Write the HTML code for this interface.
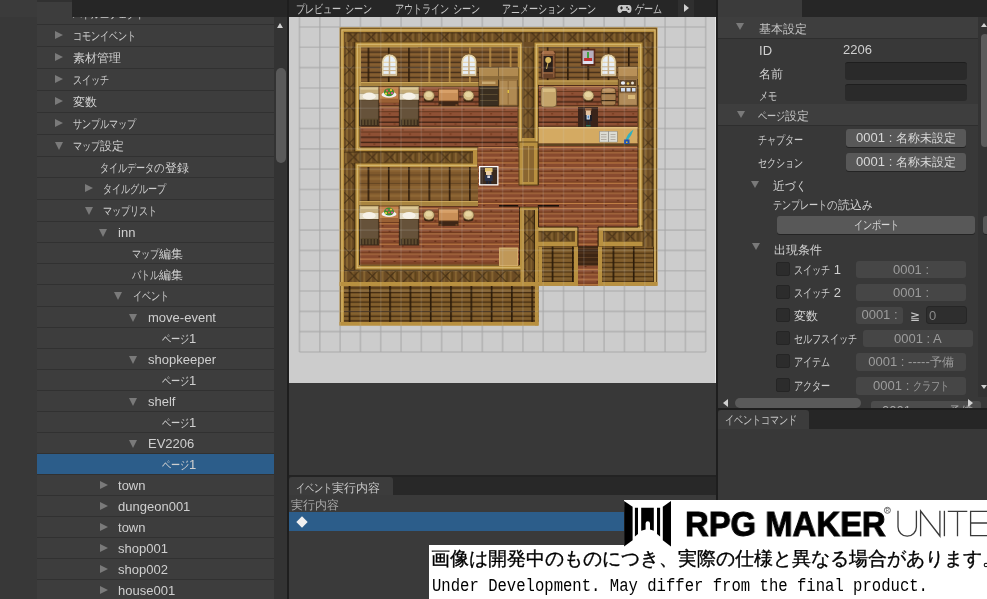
<!DOCTYPE html>
<html><head><meta charset="utf-8">
<style>
*{margin:0;padding:0;box-sizing:border-box}
html,body{width:987px;height:599px;overflow:hidden;background:#383838;font-family:"Liberation Sans",sans-serif;}
.a{position:absolute}
.row{position:absolute;left:37px;width:237px;background:#3d3d3d}
.row.sel{background:#2c5d8a}
.lbl{position:absolute;color:#cfcfcf;font-size:12px;line-height:16px;white-space:nowrap;will-change:transform}
.k{display:inline-block;width:9px;transform:scaleX(.76);transform-origin:0 0}
.h{display:inline-block;width:10.5px;transform:scaleX(.88);transform-origin:0 0}
.tri-r{position:absolute;width:0;height:0;border-top:4.5px solid transparent;border-bottom:4.5px solid transparent;border-left:8px solid #7a7a7a}
.tri-d{position:absolute;width:0;height:0;border-left:4.5px solid transparent;border-right:4.5px solid transparent;border-top:8px solid #7a7a7a}
</style></head><body>
<div class="a" style="left:0px;top:0px;width:37px;height:599px;background:#383838;"></div>
<div class="a" style="left:0px;top:0px;width:72px;height:17px;background:#3b3b3b;"></div>
<div class="a" style="left:37px;top:0px;width:237px;height:599px;background:#313131;"></div>
<div class="row" style="top:2px;height:22px"></div>
<div class="lbl" style="left:73px;top:5.6px"><span class="k">バ</span><span class="k">ト</span><span class="k">ル</span><span class="k">エ</span><span class="k">フ</span><span class="k">ェ</span><span class="k">ク</span><span class="k">ト</span></div>
<div class="row" style="top:25px;height:21px"></div>
<div class="tri-r" style="left:55px;top:31.0px"></div>
<div class="lbl" style="left:73px;top:28.1px"><span class="k">コ</span><span class="k">モ</span><span class="k">ン</span><span class="k">イ</span><span class="k">ベ</span><span class="k">ン</span><span class="k">ト</span></div>
<div class="row" style="top:47px;height:21px"></div>
<div class="tri-r" style="left:55px;top:53.0px"></div>
<div class="lbl" style="left:73px;top:50.1px">素材管理</div>
<div class="row" style="top:69px;height:21px"></div>
<div class="tri-r" style="left:55px;top:75.0px"></div>
<div class="lbl" style="left:73px;top:72.1px"><span class="k">ス</span><span class="k">イ</span><span class="k">ッ</span><span class="k">チ</span></div>
<div class="row" style="top:91px;height:21px"></div>
<div class="tri-r" style="left:55px;top:97.0px"></div>
<div class="lbl" style="left:73px;top:94.1px">変数</div>
<div class="row" style="top:113px;height:21px"></div>
<div class="tri-r" style="left:55px;top:119.0px"></div>
<div class="lbl" style="left:73px;top:116.1px"><span class="k">サ</span><span class="k">ン</span><span class="k">プ</span><span class="k">ル</span><span class="k">マ</span><span class="k">ッ</span><span class="k">プ</span></div>
<div class="row" style="top:135px;height:21px"></div>
<div class="tri-d" style="left:55px;top:142.0px"></div>
<div class="lbl" style="left:73px;top:138.1px"><span class="k">マ</span><span class="k">ッ</span><span class="k">プ</span>設定</div>
<div class="row" style="top:157px;height:20px"></div>
<div class="lbl" style="left:100px;top:159.6px"><span class="k">タ</span><span class="k">イ</span><span class="k">ル</span><span class="k">デ</span><span class="k">ー</span><span class="k">タ</span><span class="h">の</span>登録</div>
<div class="row" style="top:178px;height:21px"></div>
<div class="tri-r" style="left:85px;top:184.0px"></div>
<div class="lbl" style="left:103px;top:181.1px"><span class="k">タ</span><span class="k">イ</span><span class="k">ル</span><span class="k">グ</span><span class="k">ル</span><span class="k">ー</span><span class="k">プ</span></div>
<div class="row" style="top:200px;height:21px"></div>
<div class="tri-d" style="left:85px;top:207.0px"></div>
<div class="lbl" style="left:103px;top:203.1px"><span class="k">マ</span><span class="k">ッ</span><span class="k">プ</span><span class="k">リ</span><span class="k">ス</span><span class="k">ト</span></div>
<div class="row" style="top:222px;height:20px"></div>
<div class="tri-d" style="left:99px;top:228.5px"></div>
<div class="lbl" style="left:118px;top:224.6px"><span style="font-size:13px">i</span><span style="font-size:13px">n</span><span style="font-size:13px">n</span></div>
<div class="row" style="top:243px;height:20px"></div>
<div class="lbl" style="left:132px;top:245.6px"><span class="k">マ</span><span class="k">ッ</span><span class="k">プ</span>編集</div>
<div class="row" style="top:264px;height:20px"></div>
<div class="lbl" style="left:132px;top:266.6px"><span class="k">バ</span><span class="k">ト</span><span class="k">ル</span>編集</div>
<div class="row" style="top:285px;height:21px"></div>
<div class="tri-d" style="left:114px;top:292.0px"></div>
<div class="lbl" style="left:133px;top:288.1px"><span class="k">イ</span><span class="k">ベ</span><span class="k">ン</span><span class="k">ト</span></div>
<div class="row" style="top:307px;height:20px"></div>
<div class="tri-d" style="left:129px;top:313.5px"></div>
<div class="lbl" style="left:148px;top:309.6px"><span style="font-size:13px">m</span><span style="font-size:13px">o</span><span style="font-size:13px">v</span><span style="font-size:13px">e</span><span style="font-size:13px">-</span><span style="font-size:13px">e</span><span style="font-size:13px">v</span><span style="font-size:13px">e</span><span style="font-size:13px">n</span><span style="font-size:13px">t</span></div>
<div class="row" style="top:328px;height:20px"></div>
<div class="lbl" style="left:162px;top:330.6px"><span class="k">ペ</span><span class="k">ー</span><span class="k">ジ</span><span style="font-size:13px">1</span></div>
<div class="row" style="top:349px;height:20px"></div>
<div class="tri-d" style="left:129px;top:355.5px"></div>
<div class="lbl" style="left:148px;top:351.6px"><span style="font-size:13px">s</span><span style="font-size:13px">h</span><span style="font-size:13px">o</span><span style="font-size:13px">p</span><span style="font-size:13px">k</span><span style="font-size:13px">e</span><span style="font-size:13px">e</span><span style="font-size:13px">p</span><span style="font-size:13px">e</span><span style="font-size:13px">r</span></div>
<div class="row" style="top:370px;height:20px"></div>
<div class="lbl" style="left:162px;top:372.6px"><span class="k">ペ</span><span class="k">ー</span><span class="k">ジ</span><span style="font-size:13px">1</span></div>
<div class="row" style="top:391px;height:20px"></div>
<div class="tri-d" style="left:129px;top:397.5px"></div>
<div class="lbl" style="left:148px;top:393.6px"><span style="font-size:13px">s</span><span style="font-size:13px">h</span><span style="font-size:13px">e</span><span style="font-size:13px">l</span><span style="font-size:13px">f</span></div>
<div class="row" style="top:412px;height:20px"></div>
<div class="lbl" style="left:162px;top:414.6px"><span class="k">ペ</span><span class="k">ー</span><span class="k">ジ</span><span style="font-size:13px">1</span></div>
<div class="row" style="top:433px;height:20px"></div>
<div class="tri-d" style="left:129px;top:439.5px"></div>
<div class="lbl" style="left:148px;top:435.6px"><span style="font-size:13px">E</span><span style="font-size:13px">V</span><span style="font-size:13px">2</span><span style="font-size:13px">2</span><span style="font-size:13px">0</span><span style="font-size:13px">6</span></div>
<div class="row sel" style="top:454px;height:20px"></div>
<div class="lbl" style="left:162px;top:456.6px"><span class="k">ペ</span><span class="k">ー</span><span class="k">ジ</span><span style="font-size:13px">1</span></div>
<div class="row" style="top:475px;height:20px"></div>
<div class="tri-r" style="left:100px;top:480.5px"></div>
<div class="lbl" style="left:118px;top:477.6px"><span style="font-size:13px">t</span><span style="font-size:13px">o</span><span style="font-size:13px">w</span><span style="font-size:13px">n</span></div>
<div class="row" style="top:496px;height:20px"></div>
<div class="tri-r" style="left:100px;top:501.5px"></div>
<div class="lbl" style="left:118px;top:498.6px"><span style="font-size:13px">d</span><span style="font-size:13px">u</span><span style="font-size:13px">n</span><span style="font-size:13px">g</span><span style="font-size:13px">e</span><span style="font-size:13px">o</span><span style="font-size:13px">n</span><span style="font-size:13px">0</span><span style="font-size:13px">0</span><span style="font-size:13px">1</span></div>
<div class="row" style="top:517px;height:20px"></div>
<div class="tri-r" style="left:100px;top:522.5px"></div>
<div class="lbl" style="left:118px;top:519.6px"><span style="font-size:13px">t</span><span style="font-size:13px">o</span><span style="font-size:13px">w</span><span style="font-size:13px">n</span></div>
<div class="row" style="top:538px;height:20px"></div>
<div class="tri-r" style="left:100px;top:543.5px"></div>
<div class="lbl" style="left:118px;top:540.6px"><span style="font-size:13px">s</span><span style="font-size:13px">h</span><span style="font-size:13px">o</span><span style="font-size:13px">p</span><span style="font-size:13px">0</span><span style="font-size:13px">0</span><span style="font-size:13px">1</span></div>
<div class="row" style="top:559px;height:20px"></div>
<div class="tri-r" style="left:100px;top:564.5px"></div>
<div class="lbl" style="left:118px;top:561.6px"><span style="font-size:13px">s</span><span style="font-size:13px">h</span><span style="font-size:13px">o</span><span style="font-size:13px">p</span><span style="font-size:13px">0</span><span style="font-size:13px">0</span><span style="font-size:13px">2</span></div>
<div class="row" style="top:580px;height:20px"></div>
<div class="tri-r" style="left:100px;top:585.5px"></div>
<div class="lbl" style="left:118px;top:582.6px"><span style="font-size:13px">h</span><span style="font-size:13px">o</span><span style="font-size:13px">u</span><span style="font-size:13px">s</span><span style="font-size:13px">e</span><span style="font-size:13px">0</span><span style="font-size:13px">0</span><span style="font-size:13px">1</span></div>
<div class="a" style="left:72px;top:0px;width:216px;height:17px;background:#262626;"></div>
<div class="a" style="left:274px;top:17px;width:14px;height:582px;background:#333333;"></div>
<div class="a" style="left:276px;top:68px;width:10px;height:95px;background:#5a5a5a;border-radius:5px"></div>
<div class="a" style="left:277px;top:23px;width:0;height:0;border-left:3.5px solid transparent;border-right:3.5px solid transparent;border-bottom:5px solid #d0d0d0"></div>
<div class="a" style="left:287px;top:0px;width:2px;height:599px;background:#1e1e1e;"></div>
<div class="a" style="left:289px;top:0px;width:427px;height:17px;background:#262626;"></div>
<div class="a" style="left:289px;top:17px;width:427px;height:366px;background:#cccccc;"></div>
<div class="a" style="left:715px;top:17px;width:1px;height:366px;background:#e4e4e4;"></div>
<svg class="a" style="left:289px;top:17px" width="427" height="366"><line x1="10.50" y1="0" x2="10.50" y2="334.96" stroke="#8a8a8a" stroke-opacity=".38" stroke-width="1.6"/><line x1="30.81" y1="0" x2="30.81" y2="334.96" stroke="#8a8a8a" stroke-opacity=".38" stroke-width="1.6"/><line x1="51.12" y1="0" x2="51.12" y2="334.96" stroke="#8a8a8a" stroke-opacity=".38" stroke-width="1.6"/><line x1="71.43" y1="0" x2="71.43" y2="334.96" stroke="#8a8a8a" stroke-opacity=".38" stroke-width="1.6"/><line x1="91.74" y1="0" x2="91.74" y2="334.96" stroke="#8a8a8a" stroke-opacity=".38" stroke-width="1.6"/><line x1="112.05" y1="0" x2="112.05" y2="334.96" stroke="#8a8a8a" stroke-opacity=".38" stroke-width="1.6"/><line x1="132.36" y1="0" x2="132.36" y2="334.96" stroke="#8a8a8a" stroke-opacity=".38" stroke-width="1.6"/><line x1="152.67" y1="0" x2="152.67" y2="334.96" stroke="#8a8a8a" stroke-opacity=".38" stroke-width="1.6"/><line x1="172.98" y1="0" x2="172.98" y2="334.96" stroke="#8a8a8a" stroke-opacity=".38" stroke-width="1.6"/><line x1="193.29" y1="0" x2="193.29" y2="334.96" stroke="#8a8a8a" stroke-opacity=".38" stroke-width="1.6"/><line x1="213.60" y1="0" x2="213.60" y2="334.96" stroke="#8a8a8a" stroke-opacity=".38" stroke-width="1.6"/><line x1="233.91" y1="0" x2="233.91" y2="334.96" stroke="#8a8a8a" stroke-opacity=".38" stroke-width="1.6"/><line x1="254.22" y1="0" x2="254.22" y2="334.96" stroke="#8a8a8a" stroke-opacity=".38" stroke-width="1.6"/><line x1="274.53" y1="0" x2="274.53" y2="334.96" stroke="#8a8a8a" stroke-opacity=".38" stroke-width="1.6"/><line x1="294.84" y1="0" x2="294.84" y2="334.96" stroke="#8a8a8a" stroke-opacity=".38" stroke-width="1.6"/><line x1="315.15" y1="0" x2="315.15" y2="334.96" stroke="#8a8a8a" stroke-opacity=".38" stroke-width="1.6"/><line x1="335.46" y1="0" x2="335.46" y2="334.96" stroke="#8a8a8a" stroke-opacity=".38" stroke-width="1.6"/><line x1="355.77" y1="0" x2="355.77" y2="334.96" stroke="#8a8a8a" stroke-opacity=".38" stroke-width="1.6"/><line x1="376.08" y1="0" x2="376.08" y2="334.96" stroke="#8a8a8a" stroke-opacity=".38" stroke-width="1.6"/><line x1="396.39" y1="0" x2="396.39" y2="334.96" stroke="#8a8a8a" stroke-opacity=".38" stroke-width="1.6"/><line x1="416.70" y1="0" x2="416.70" y2="334.96" stroke="#8a8a8a" stroke-opacity=".38" stroke-width="1.6"/><line x1="10.50" y1="10.00" x2="416.70" y2="10.00" stroke="#8a8a8a" stroke-opacity=".38" stroke-width="1.6"/><line x1="10.50" y1="30.31" x2="416.70" y2="30.31" stroke="#8a8a8a" stroke-opacity=".38" stroke-width="1.6"/><line x1="10.50" y1="50.62" x2="416.70" y2="50.62" stroke="#8a8a8a" stroke-opacity=".38" stroke-width="1.6"/><line x1="10.50" y1="70.93" x2="416.70" y2="70.93" stroke="#8a8a8a" stroke-opacity=".38" stroke-width="1.6"/><line x1="10.50" y1="91.24" x2="416.70" y2="91.24" stroke="#8a8a8a" stroke-opacity=".38" stroke-width="1.6"/><line x1="10.50" y1="111.55" x2="416.70" y2="111.55" stroke="#8a8a8a" stroke-opacity=".38" stroke-width="1.6"/><line x1="10.50" y1="131.86" x2="416.70" y2="131.86" stroke="#8a8a8a" stroke-opacity=".38" stroke-width="1.6"/><line x1="10.50" y1="152.17" x2="416.70" y2="152.17" stroke="#8a8a8a" stroke-opacity=".38" stroke-width="1.6"/><line x1="10.50" y1="172.48" x2="416.70" y2="172.48" stroke="#8a8a8a" stroke-opacity=".38" stroke-width="1.6"/><line x1="10.50" y1="192.79" x2="416.70" y2="192.79" stroke="#8a8a8a" stroke-opacity=".38" stroke-width="1.6"/><line x1="10.50" y1="213.10" x2="416.70" y2="213.10" stroke="#8a8a8a" stroke-opacity=".38" stroke-width="1.6"/><line x1="10.50" y1="233.41" x2="416.70" y2="233.41" stroke="#8a8a8a" stroke-opacity=".38" stroke-width="1.6"/><line x1="10.50" y1="253.72" x2="416.70" y2="253.72" stroke="#8a8a8a" stroke-opacity=".38" stroke-width="1.6"/><line x1="10.50" y1="274.03" x2="416.70" y2="274.03" stroke="#8a8a8a" stroke-opacity=".38" stroke-width="1.6"/><line x1="10.50" y1="294.34" x2="416.70" y2="294.34" stroke="#8a8a8a" stroke-opacity=".38" stroke-width="1.6"/><line x1="10.50" y1="314.65" x2="416.70" y2="314.65" stroke="#8a8a8a" stroke-opacity=".38" stroke-width="1.6"/><line x1="10.50" y1="334.96" x2="416.70" y2="334.96" stroke="#8a8a8a" stroke-opacity=".38" stroke-width="1.6"/></svg>
<svg class="a" style="left:0;top:0" width="987" height="599" viewBox="0 0 987 599">
<defs>
<pattern id="floor" x="0" y="25.2" width="20.3" height="20.3" patternUnits="userSpaceOnUse">
<rect width="20.3" height="20.3" fill="#884a2e"/>
<rect y="0" width="20.3" height="1.1" fill="#c28250"/>
<rect y="5.07" width="20.3" height="1.1" fill="#b87a48"/>
<rect y="10.15" width="20.3" height="1.1" fill="#c28250"/>
<rect y="15.22" width="20.3" height="1.1" fill="#cc884a"/>
<rect y="4.1" width="20.3" height="0.9" fill="#6a3418"/>
<rect y="14.2" width="20.3" height="0.9" fill="#6a3418"/>
<rect x="3" y="2.5" width="2" height="1" fill="#5e2a12"/><rect x="13" y="7.5" width="2" height="1" fill="#5e2a12"/><rect x="8" y="12.5" width="2" height="1" fill="#5e2a12"/><rect x="16" y="17.5" width="2" height="1" fill="#5e2a12"/>
</pattern>
<pattern id="floorD" x="0" y="25.2" width="20.3" height="20.3" patternUnits="userSpaceOnUse">
<rect width="20.3" height="20.3" fill="#8e5034"/>
<rect y="0" width="20.3" height="1.1" fill="#c68c56"/>
<rect y="1.1" width="20.3" height="3.9" fill="#94563a"/>
<rect y="5" width="20.3" height="0.8" fill="#5a3018"/>
<rect y="10.1" width="20.3" height="1" fill="#241208"/>
<rect y="15.2" width="20.3" height="1" fill="#241208"/>
<rect y="19.3" width="20.3" height="1" fill="#3a1e0e"/>
<rect x="3" y="7" width="2" height="1" fill="#6e3418"/><rect x="13" y="12" width="2" height="1" fill="#6e3418"/><rect x="8" y="17" width="2" height="1" fill="#6e3418"/><rect x="16" y="2.5" width="2" height="1" fill="#6e3418"/>
</pattern>
<pattern id="wall" x="2.2" y="47.5" width="20.3" height="5.1" patternUnits="userSpaceOnUse">
<rect width="20.3" height="5.1" fill="#77522a"/>
<rect y="1.2" width="20.3" height="1.6" fill="#8a6232"/>
<rect y="4.1" width="20.3" height="1" fill="#45301a"/>
<rect x="0" width="1.6" height="5.1" fill="#2e1c0a"/>
</pattern>
<pattern id="wallS" x="2.2" y="167" width="20.3" height="8.5" patternUnits="userSpaceOnUse">
<rect width="20.3" height="8.5" fill="#80592c"/>
<rect y="2" width="20.3" height="2.5" fill="#8e6634"/>
<rect y="7.5" width="20.3" height="0.8" fill="#5e4220"/>
<rect x="0" width="1.6" height="8.5" fill="#2e1c0a"/>
</pattern>
<pattern id="wallG" x="2.2" y="47.5" width="20.3" height="5.1" patternUnits="userSpaceOnUse">
<rect width="20.3" height="5.1" fill="#77522a"/>
<rect y="1.2" width="20.3" height="1.6" fill="#8a6232"/>
<rect y="4.1" width="20.3" height="1" fill="#45301a"/>
<rect x="0" width="1.6" height="5.1" fill="#b88e48"/>
</pattern>
<pattern id="wallB" x="-1.3" y="47.5" width="20.3" height="5.1" patternUnits="userSpaceOnUse">
<rect width="20.3" height="5.1" fill="#77522a"/>
<rect y="1.2" width="20.3" height="1.6" fill="#8a6232"/>
<rect y="4.1" width="20.3" height="1" fill="#45301a"/>
<rect x="0" width="1.6" height="5.1" fill="#2e1c0a"/>
</pattern>
<pattern id="latH_344_32p3" x="344" y="32.3" width="18.3" height="9.70" patternUnits="userSpaceOnUse"><rect width="18.3" height="9.70" fill="#6c4c24"/><rect x="1" width="2" height="9.70" fill="#866430"/><rect x="8" width="1.5" height="9.70" fill="#7e5e2c"/><rect x="13" width="2" height="9.70" fill="#866430"/><rect x="16" width="1.2" height="9.70" fill="#5a4016"/><path d="M4 0L13.70 9.70M13.70 0L4 9.70" stroke="#2e1e0a" stroke-width="1.2" opacity=".55"/><rect width="18.3" height="1" fill="#3e2a10"/></pattern><pattern id="latV_344_42" x="344" y="42" width="11.00" height="18.3" patternUnits="userSpaceOnUse"><rect width="11.00" height="18.3" fill="#6c4c24"/><rect x="2" width="2" height="18.3" fill="#866430"/><rect x="6.5" width="1.5" height="18.3" fill="#7e5e2c"/><rect x="9.80" width="1.2" height="18.3" fill="#3a280e"/><path d="M0 4L11.00 15.00M11.00 4L0 15.00" stroke="#2e1e0a" stroke-width="1.2" opacity=".55"/></pattern><pattern id="latV_643_42" x="643" y="42" width="10.50" height="18.3" patternUnits="userSpaceOnUse"><rect width="10.50" height="18.3" fill="#6c4c24"/><rect x="2" width="2" height="18.3" fill="#866430"/><rect x="6.5" width="1.5" height="18.3" fill="#7e5e2c"/><rect x="9.30" width="1.2" height="18.3" fill="#3a280e"/><path d="M0 4L10.50 14.50M10.50 4L0 14.50" stroke="#2e1e0a" stroke-width="1.2" opacity=".55"/></pattern><pattern id="latV_522p7_47" x="522.7" y="47" width="11.30" height="18.3" patternUnits="userSpaceOnUse"><rect width="11.30" height="18.3" fill="#6c4c24"/><rect x="2" width="2" height="18.3" fill="#866430"/><rect x="6.5" width="1.5" height="18.3" fill="#7e5e2c"/><rect x="10.10" width="1.2" height="18.3" fill="#3a280e"/><path d="M0 4L11.30 15.30M11.30 4L0 15.30" stroke="#2e1e0a" stroke-width="1.2" opacity=".55"/></pattern><pattern id="latH_344_151p5" x="344" y="151.5" width="18.3" height="11.50" patternUnits="userSpaceOnUse"><rect width="18.3" height="11.50" fill="#6c4c24"/><rect x="1" width="2" height="11.50" fill="#866430"/><rect x="8" width="1.5" height="11.50" fill="#7e5e2c"/><rect x="13" width="2" height="11.50" fill="#866430"/><rect x="16" width="1.2" height="11.50" fill="#5a4016"/><path d="M4 0L15.50 11.50M15.50 0L4 11.50" stroke="#2e1e0a" stroke-width="1.2" opacity=".55"/><rect width="18.3" height="1" fill="#3e2a10"/></pattern><pattern id="latH_344_270" x="344" y="270" width="18.3" height="12.00" patternUnits="userSpaceOnUse"><rect width="18.3" height="12.00" fill="#6c4c24"/><rect x="1" width="2" height="12.00" fill="#866430"/><rect x="8" width="1.5" height="12.00" fill="#7e5e2c"/><rect x="13" width="2" height="12.00" fill="#866430"/><rect x="16" width="1.2" height="12.00" fill="#5a4016"/><path d="M4 0L16.00 12.00M16.00 0L4 12.00" stroke="#2e1e0a" stroke-width="1.2" opacity=".55"/><rect width="18.3" height="1" fill="#3e2a10"/></pattern><pattern id="latH_537p8_231p2" x="537.8" y="231.2" width="18.3" height="10.40" patternUnits="userSpaceOnUse"><rect width="18.3" height="10.40" fill="#6c4c24"/><rect x="1" width="2" height="10.40" fill="#866430"/><rect x="8" width="1.5" height="10.40" fill="#7e5e2c"/><rect x="13" width="2" height="10.40" fill="#866430"/><rect x="16" width="1.2" height="10.40" fill="#5a4016"/><path d="M4 0L14.40 10.40M14.40 0L4 10.40" stroke="#2e1e0a" stroke-width="1.2" opacity=".55"/><rect width="18.3" height="1" fill="#3e2a10"/></pattern><pattern id="latH_603_231p2" x="603" y="231.2" width="18.3" height="10.40" patternUnits="userSpaceOnUse"><rect width="18.3" height="10.40" fill="#6c4c24"/><rect x="1" width="2" height="10.40" fill="#866430"/><rect x="8" width="1.5" height="10.40" fill="#7e5e2c"/><rect x="13" width="2" height="10.40" fill="#866430"/><rect x="16" width="1.2" height="10.40" fill="#5a4016"/><path d="M4 0L14.40 10.40M14.40 0L4 10.40" stroke="#2e1e0a" stroke-width="1.2" opacity=".55"/><rect width="18.3" height="1" fill="#3e2a10"/></pattern><pattern id="latV_524_210" x="524" y="210" width="11.00" height="18.3" patternUnits="userSpaceOnUse"><rect width="11.00" height="18.3" fill="#6c4c24"/><rect x="2" width="2" height="18.3" fill="#866430"/><rect x="6.5" width="1.5" height="18.3" fill="#7e5e2c"/><rect x="9.80" width="1.2" height="18.3" fill="#3a280e"/><path d="M0 4L11.00 15.00M11.00 4L0 15.00" stroke="#2e1e0a" stroke-width="1.2" opacity=".55"/></pattern>
<pattern id="porch" x="3.6" y="287.5" width="20.3" height="4.7" patternUnits="userSpaceOnUse">
<rect width="20.3" height="4.7" fill="#7c5828"/>
<rect y="2" width="20.3" height="1.2" fill="#866430"/>
<rect y="0" width="20.3" height="1" fill="#3a260e"/>
<rect x="0" width="1.6" height="4.7" fill="#2a1a08"/>
</pattern>
<pattern id="wall2" x="3.6" y="248" width="20.3" height="4.7" patternUnits="userSpaceOnUse">
<rect width="20.3" height="4.7" fill="#7c5828"/>
<rect y="2" width="20.3" height="1.2" fill="#866430"/>
<rect y="0" width="20.3" height="1" fill="#4a3212"/>
<rect x="0" width="1.6" height="4.7" fill="#2a1a08"/>
</pattern>
</defs>
<path d="M339.5 27.3H657.5V285.7H538.5V325.5H339.5Z" fill="#b89040"/>
<path d="M340.5 28.3H656.5V284.7H537.5V324.5H340.5Z" fill="none" stroke="#6e4e1c" stroke-width="1"/>
<path d="M342 30H655V283H536V323H342Z" fill="none" stroke="#dcc078" stroke-width=".9"/>
<rect x="344" y="32.3" width="309.50" height="249.70" fill="#6c4c24" />
<rect x="344" y="32.3" width="309.50" height="9.70" fill="url(#latH_344_32p3)" />
<rect x="344" y="42" width="11.00" height="240.00" fill="url(#latV_344_42)" />
<rect x="643" y="42" width="10.50" height="240.00" fill="url(#latV_643_42)" />
<rect x="522.7" y="47" width="11.30" height="95.00" fill="url(#latV_522p7_47)" />
<rect x="344" y="151.5" width="133.50" height="11.50" fill="url(#latH_344_151p5)" />
<rect x="344" y="270" width="180.00" height="12.00" fill="url(#latH_344_270)" />
<rect x="355" y="42" width="167.70" height="109.50" fill="#b89040" stroke="#5e4218" stroke-width="1"/>
<rect x="534" y="42" width="109.00" height="189.20" fill="#b89040" stroke="#5e4218" stroke-width="1"/>
<rect x="355" y="163" width="169.00" height="107.00" fill="#b89040" stroke="#5e4218" stroke-width="1"/>
<rect x="473" y="147" width="51.00" height="63.00" fill="#b89040" />
<rect x="515" y="138" width="27.00" height="72.00" fill="#b89040" />
<rect x="534" y="226" width="44.00" height="20.70" fill="#b89040" stroke="#5e4218" stroke-width="1"/>
<rect x="598" y="226" width="45.00" height="20.70" fill="#b89040" stroke="#5e4218" stroke-width="1"/>
<rect x="357.3" y="44.3" width="163.10" height="104.90" fill="none" stroke="#dcc078" stroke-width=".9"/>
<rect x="536.3" y="44.3" width="104.40" height="184.60" fill="none" stroke="#dcc078" stroke-width=".9"/>
<rect x="357.3" y="165.3" width="164.40" height="102.40" fill="none" stroke="#dcc078" stroke-width=".9"/>
<rect x="537.8" y="231.2" width="37.20" height="10.40" fill="url(#latH_537p8_231p2)" />
<rect x="603" y="231.2" width="40.00" height="10.40" fill="url(#latH_603_231p2)" />
<rect x="520.4" y="207.4" width="18.10" height="74.60" fill="#b89040" />
<rect x="524" y="210" width="11.00" height="72.00" fill="url(#latV_524_210)" />
<path d="M360 86.5H518V147H519V206H519.5V265H359.5V206H478V147H360Z" fill="url(#floor)" stroke="#3a2410" stroke-width="1"/>
<rect x="360.5" y="87" width="157.00" height="59.50" fill="url(#floorD)" />
<path d="M538.5 85H638V227H598V246.7H578V227H538.5V207H519V185H538.5Z" fill="url(#floor)" stroke="#3a2410" stroke-width="1"/>
<rect x="519" y="185.5" width="20.00" height="21.00" fill="url(#floor)" />
<rect x="477.5" y="147.5" width="41.50" height="58.00" fill="url(#floor)" />
<rect x="361" y="47.5" width="156.50" height="34.50" fill="url(#wall)" />
<rect x="418" y="47.5" width="99.50" height="34.50" fill="url(#wallG)" />
<rect x="361" y="82" width="156.50" height="4.50" fill="#a88440" />
<rect x="361" y="82" width="156.50" height="1.00" fill="#c8a458" />
<rect x="538.5" y="47" width="99.50" height="33.50" fill="url(#wallB)" />
<rect x="538.5" y="80.5" width="99.50" height="4.50" fill="#a88440" />
<rect x="538.5" y="80.5" width="99.50" height="1.00" fill="#c8a458" />
<rect x="359.5" y="167" width="118.50" height="34.00" fill="url(#wallS)" />
<rect x="359.5" y="201" width="118.50" height="5.00" fill="#a88440" />
<rect x="359.5" y="201" width="118.50" height="1.00" fill="#c8a458" />
<rect x="519" y="142" width="19.00" height="43.00" fill="#b89040" stroke="#5e4218" stroke-width="1"/>
<rect x="523" y="146" width="11.00" height="36.00" fill="#8a6630" />
<rect x="528" y="146" width="1.20" height="36.00" fill="#b08a48" />
<rect x="538.5" y="246.7" width="39.50" height="35.30" fill="url(#wall2)" />
<rect x="598" y="246.7" width="55.70" height="35.30" fill="url(#wall2)" />
<rect x="538.5" y="246.7" width="3.50" height="35.30" fill="#b89040" />
<rect x="574" y="246.7" width="4.00" height="35.30" fill="#b89040" />
<rect x="598" y="246.7" width="4.00" height="35.30" fill="#b89040" />
<rect x="538.5" y="282" width="119.00" height="3.70" fill="#b89040" />
<rect x="578" y="246.7" width="20.00" height="18.90" fill="#3e2614" />
<rect x="578" y="248.0" width="20.00" height="1.00" fill="#5a3a20" />
<rect x="578" y="252.5" width="20.00" height="1.00" fill="#5a3a20" />
<rect x="578" y="257.0" width="20.00" height="1.00" fill="#5a3a20" />
<rect x="578" y="261.5" width="20.00" height="1.00" fill="#5a3a20" />
<rect x="578" y="265.6" width="20.00" height="20.10" fill="url(#floor)" />
<rect x="344" y="286" width="194.50" height="36.00" fill="url(#porch)" />
<rect x="339.5" y="282" width="199.00" height="4.00" fill="#b89040" />
<rect x="339.5" y="322" width="199.00" height="3.50" fill="#b89040" />
<rect x="535" y="282" width="3.50" height="43.50" fill="#b89040" />
<rect x="538.5" y="127" width="99.00" height="16.50" fill="#d4aa62" />
<rect x="538.5" y="127" width="99.00" height="1.30" fill="#e4c07a" />
<rect x="538.5" y="143.5" width="99.00" height="2.50" fill="#5e4420" />
<rect x="359.4" y="86.7" width="19.50" height="39.00" fill="#5c4a2e" stroke="#2e2214" stroke-width=".8"/>
<rect x="359.4" y="86.7" width="19.50" height="7.00" fill="#c4ac78" />
<rect x="360.4" y="87.7" width="17.50" height="2.00" fill="#dcc896" />
<rect x="359.4" y="93.7" width="19.50" height="6.00" fill="#e4dcc4" />
<ellipse cx="369.15" cy="96.2" rx="6.5" ry="3.6" fill="#f6f2e8"/>
<rect x="360.4" y="100.7" width="17.50" height="18.00" fill="#66523a" />
<rect x="360.9" y="119.7" width="1.20" height="6.00" fill="#3a2c1c" />
<rect x="364.09999999999997" y="119.7" width="1.20" height="6.00" fill="#3a2c1c" />
<rect x="367.29999999999995" y="119.7" width="1.20" height="6.00" fill="#3a2c1c" />
<rect x="370.5" y="119.7" width="1.20" height="6.00" fill="#3a2c1c" />
<rect x="373.7" y="119.7" width="1.20" height="6.00" fill="#3a2c1c" />
<rect x="376.9" y="119.7" width="1.20" height="6.00" fill="#3a2c1c" />
<rect x="399.3" y="86.7" width="19.50" height="39.00" fill="#5c4a2e" stroke="#2e2214" stroke-width=".8"/>
<rect x="399.3" y="86.7" width="19.50" height="7.00" fill="#c4ac78" />
<rect x="400.3" y="87.7" width="17.50" height="2.00" fill="#dcc896" />
<rect x="399.3" y="93.7" width="19.50" height="6.00" fill="#e4dcc4" />
<ellipse cx="409.05" cy="96.2" rx="6.5" ry="3.6" fill="#f6f2e8"/>
<rect x="400.3" y="100.7" width="17.50" height="18.00" fill="#66523a" />
<rect x="400.8" y="119.7" width="1.20" height="6.00" fill="#3a2c1c" />
<rect x="404.0" y="119.7" width="1.20" height="6.00" fill="#3a2c1c" />
<rect x="407.2" y="119.7" width="1.20" height="6.00" fill="#3a2c1c" />
<rect x="410.40000000000003" y="119.7" width="1.20" height="6.00" fill="#3a2c1c" />
<rect x="413.6" y="119.7" width="1.20" height="6.00" fill="#3a2c1c" />
<rect x="416.8" y="119.7" width="1.20" height="6.00" fill="#3a2c1c" />
<rect x="359.4" y="206" width="19.50" height="39.00" fill="#5c4a2e" stroke="#2e2214" stroke-width=".8"/>
<rect x="359.4" y="206" width="19.50" height="7.00" fill="#c4ac78" />
<rect x="360.4" y="207" width="17.50" height="2.00" fill="#dcc896" />
<rect x="359.4" y="213" width="19.50" height="6.00" fill="#e4dcc4" />
<ellipse cx="369.15" cy="215.5" rx="6.5" ry="3.6" fill="#f6f2e8"/>
<rect x="360.4" y="220" width="17.50" height="18.00" fill="#66523a" />
<rect x="360.9" y="239" width="1.20" height="6.00" fill="#3a2c1c" />
<rect x="364.09999999999997" y="239" width="1.20" height="6.00" fill="#3a2c1c" />
<rect x="367.29999999999995" y="239" width="1.20" height="6.00" fill="#3a2c1c" />
<rect x="370.5" y="239" width="1.20" height="6.00" fill="#3a2c1c" />
<rect x="373.7" y="239" width="1.20" height="6.00" fill="#3a2c1c" />
<rect x="376.9" y="239" width="1.20" height="6.00" fill="#3a2c1c" />
<rect x="399.3" y="206" width="19.50" height="39.00" fill="#5c4a2e" stroke="#2e2214" stroke-width=".8"/>
<rect x="399.3" y="206" width="19.50" height="7.00" fill="#c4ac78" />
<rect x="400.3" y="207" width="17.50" height="2.00" fill="#dcc896" />
<rect x="399.3" y="213" width="19.50" height="6.00" fill="#e4dcc4" />
<ellipse cx="409.05" cy="215.5" rx="6.5" ry="3.6" fill="#f6f2e8"/>
<rect x="400.3" y="220" width="17.50" height="18.00" fill="#66523a" />
<rect x="400.8" y="239" width="1.20" height="6.00" fill="#3a2c1c" />
<rect x="404.0" y="239" width="1.20" height="6.00" fill="#3a2c1c" />
<rect x="407.2" y="239" width="1.20" height="6.00" fill="#3a2c1c" />
<rect x="410.40000000000003" y="239" width="1.20" height="6.00" fill="#3a2c1c" />
<rect x="413.6" y="239" width="1.20" height="6.00" fill="#3a2c1c" />
<rect x="416.8" y="239" width="1.20" height="6.00" fill="#3a2c1c" />
<rect x="379" y="86.7" width="20.00" height="16.00" fill="#c4844c" stroke="#5a3418" stroke-width=".8"/>
<rect x="379" y="98.7" width="20.00" height="4.00" fill="#9a6034" />
<ellipse cx="389" cy="94.7" rx="7.5" ry="3" fill="#f0f0f0"/>
<ellipse cx="389" cy="92.2" rx="5" ry="4" fill="#3e8a2e"/>
<circle cx="387" cy="90.7" r="1.1" fill="#e04a60"/>
<circle cx="391" cy="90.2" r="1.1" fill="#f0c030"/>
<circle cx="389" cy="93.2" r="1.1" fill="#e06040"/>
<circle cx="392" cy="93.2" r="1.1" fill="#e050a0"/>
<circle cx="386" cy="93.7" r="1.1" fill="#f0e040"/>
<rect x="379" y="206" width="20.00" height="16.00" fill="#c4844c" stroke="#5a3418" stroke-width=".8"/>
<rect x="379" y="218" width="20.00" height="4.00" fill="#9a6034" />
<ellipse cx="389" cy="214" rx="7.5" ry="3" fill="#f0f0f0"/>
<ellipse cx="389" cy="211.5" rx="5" ry="4" fill="#3e8a2e"/>
<circle cx="387" cy="210.0" r="1.1" fill="#e04a60"/>
<circle cx="391" cy="209.5" r="1.1" fill="#f0c030"/>
<circle cx="389" cy="212.5" r="1.1" fill="#e06040"/>
<circle cx="392" cy="212.5" r="1.1" fill="#e050a0"/>
<circle cx="386" cy="213.0" r="1.1" fill="#f0e040"/>
<ellipse cx="428.9" cy="99.6" rx="5" ry="2.5" fill="#3a2410"/>
<ellipse cx="428.9" cy="95.6" rx="5.5" ry="5" fill="#d6be86" stroke="#6a5030" stroke-width=".7"/>
<ellipse cx="428.9" cy="94.6" rx="3.5" ry="2.6" fill="#e6d4a0"/>
<ellipse cx="468.5" cy="99.6" rx="5" ry="2.5" fill="#3a2410"/>
<ellipse cx="468.5" cy="95.6" rx="5.5" ry="5" fill="#d6be86" stroke="#6a5030" stroke-width=".7"/>
<ellipse cx="468.5" cy="94.6" rx="3.5" ry="2.6" fill="#e6d4a0"/>
<ellipse cx="428.9" cy="219" rx="5" ry="2.5" fill="#3a2410"/>
<ellipse cx="428.9" cy="215" rx="5.5" ry="5" fill="#d6be86" stroke="#6a5030" stroke-width=".7"/>
<ellipse cx="428.9" cy="214" rx="3.5" ry="2.6" fill="#e6d4a0"/>
<ellipse cx="468.5" cy="219" rx="5" ry="2.5" fill="#3a2410"/>
<ellipse cx="468.5" cy="215" rx="5.5" ry="5" fill="#d6be86" stroke="#6a5030" stroke-width=".7"/>
<ellipse cx="468.5" cy="214" rx="3.5" ry="2.6" fill="#e6d4a0"/>
<rect x="438.5" y="100" width="20.00" height="6.00" fill="#3e2616" />
<rect x="439.5" y="104" width="2.00" height="2.00" fill="#6a4020" />
<rect x="455.5" y="104" width="2.00" height="2.00" fill="#6a4020" />
<rect x="438.5" y="89" width="20.00" height="12.00" fill="#c88e56" stroke="#6a4020" stroke-width=".8"/>
<rect x="439.5" y="90" width="18.00" height="3.00" fill="#d8a068" />
<rect x="438.5" y="219.9" width="20.00" height="6.00" fill="#3e2616" />
<rect x="439.5" y="223.9" width="2.00" height="2.00" fill="#6a4020" />
<rect x="455.5" y="223.9" width="2.00" height="2.00" fill="#6a4020" />
<rect x="438.5" y="208.9" width="20.00" height="12.00" fill="#c88e56" stroke="#6a4020" stroke-width=".8"/>
<rect x="439.5" y="209.9" width="18.00" height="3.00" fill="#d8a068" />
<rect x="479" y="67.5" width="19.50" height="38.50" fill="#3a2e20" stroke="#2a1e10" stroke-width=".8"/>
<rect x="479" y="67.5" width="19.50" height="12.10" fill="#b08a50" />
<rect x="479" y="76" width="19.50" height="3.60" fill="#8e6c3a" />
<rect x="479" y="79.6" width="19.50" height="6.40" fill="#a07840" />
<rect x="482" y="81.5" width="13.50" height="2.50" fill="#c8a870" />
<rect x="480" y="88" width="17.50" height="1.00" fill="#5a4a30" />
<rect x="480" y="94" width="17.50" height="1.00" fill="#5a4a30" />
<rect x="480" y="100" width="17.50" height="1.00" fill="#5a4a30" />
<rect x="498.5" y="67.5" width="19.50" height="38.50" fill="#9a7440" stroke="#3a2a14" stroke-width=".8"/>
<rect x="498.5" y="67.5" width="19.50" height="12.10" fill="#b08a50" />
<rect x="498.5" y="76" width="19.50" height="3.60" fill="#8e6c3a" />
<rect x="500" y="81" width="7.50" height="23.50" fill="#b08a52" />
<rect x="509" y="81" width="7.50" height="23.50" fill="#b08a52" />
<rect x="507.5" y="90" width="1.50" height="3.00" fill="#e0c040" />
<path d="M381.6 76.3V61.8A7.9 7.9 0 0 1 397.40000000000003 61.8V76.3Z" fill="#e6d4a8" stroke="#6a4a22" stroke-width=".8"/>
<path d="M383.6 61.8A5.9 5.9 0 0 1 395.40000000000003 61.8Z" fill="#e8f0f8"/>
<rect x="383.6" y="62.8" width="5.20" height="12.00" fill="#e8f0f8" />
<rect x="390.20000000000005" y="62.8" width="5.20" height="12.00" fill="#e8f0f8" />
<rect x="383.1" y="66.3" width="12.80" height="1.00" fill="#c8b088" />
<rect x="383.1" y="70.1" width="12.80" height="1.00" fill="#c8b088" />
<rect x="383.1" y="73.89999999999999" width="12.80" height="1.00" fill="#c8b088" />
<rect x="388.8" y="55.8" width="1.40" height="20.00" fill="#c8b088" />
<path d="M461 76.3V61.8A7.9 7.9 0 0 1 476.8 61.8V76.3Z" fill="#e6d4a8" stroke="#6a4a22" stroke-width=".8"/>
<path d="M463 61.8A5.9 5.9 0 0 1 474.8 61.8Z" fill="#e8f0f8"/>
<rect x="463" y="62.8" width="5.20" height="12.00" fill="#e8f0f8" />
<rect x="469.6" y="62.8" width="5.20" height="12.00" fill="#e8f0f8" />
<rect x="462.5" y="66.3" width="12.80" height="1.00" fill="#c8b088" />
<rect x="462.5" y="70.1" width="12.80" height="1.00" fill="#c8b088" />
<rect x="462.5" y="73.89999999999999" width="12.80" height="1.00" fill="#c8b088" />
<rect x="468.2" y="55.8" width="1.40" height="20.00" fill="#c8b088" />
<path d="M600.5 76.3V61.8A7.9 7.9 0 0 1 616.3 61.8V76.3Z" fill="#e6d4a8" stroke="#6a4a22" stroke-width=".8"/>
<path d="M602.5 61.8A5.9 5.9 0 0 1 614.3 61.8Z" fill="#e8f0f8"/>
<rect x="602.5" y="62.8" width="5.20" height="12.00" fill="#e8f0f8" />
<rect x="609.1" y="62.8" width="5.20" height="12.00" fill="#e8f0f8" />
<rect x="602.0" y="66.3" width="12.80" height="1.00" fill="#c8b088" />
<rect x="602.0" y="70.1" width="12.80" height="1.00" fill="#c8b088" />
<rect x="602.0" y="73.89999999999999" width="12.80" height="1.00" fill="#c8b088" />
<rect x="607.7" y="55.8" width="1.40" height="20.00" fill="#c8b088" />
<rect x="538.8" y="85.5" width="98.70" height="41.50" fill="url(#floorD)" />
<rect x="541.3" y="52" width="13.70" height="26.00" fill="#8a5a38" stroke="#4a2a14" stroke-width=".8"/>
<path d="M541.3 54L543 50.8H553.3L555 54Z" fill="#a87048"/>
<rect x="543.5" y="56" width="9.30" height="16.00" fill="#2a1e18" />
<circle cx="548.2" cy="60" r="3" fill="#d8b860"/>
<path d="M548.2 62L546.5 69" stroke="#d8b860" stroke-width="1"/>
<rect x="543" y="74" width="10.00" height="4.00" fill="#6a4228" />
<rect x="580.9" y="48.7" width="14.40" height="17.10" fill="#5a2a18" />
<rect x="582.5" y="50.5" width="11.20" height="13.50" fill="#b8b0c0" />
<rect x="587" y="52" width="2.00" height="7.00" fill="#40a040" />
<rect x="584" y="58" width="8.00" height="3.00" fill="#c03030" />
<rect x="583" y="61" width="10.00" height="3.00" fill="#e0e0f0" />
<rect x="618.3" y="66.8" width="19.20" height="39.00" fill="#9a7448" stroke="#4a3418" stroke-width=".8"/>
<rect x="618.3" y="66.8" width="19.20" height="12.20" fill="#b89058" />
<rect x="618.3" y="76" width="19.20" height="3.00" fill="#947040" />
<rect x="619.5" y="80" width="16.80" height="12.50" fill="#5e4428" />
<rect x="619.5" y="86" width="16.80" height="1.00" fill="#c8a870" />
<ellipse cx="623" cy="83" rx="2.2" ry="1.8" fill="#e8eef8"/><circle cx="628" cy="83.5" r="1.3" fill="#e0c050"/><circle cx="632.5" cy="83" r="1.5" fill="#e8e0d0"/>
<rect x="621" y="88" width="4.00" height="3.50" fill="#d0dcf0" />
<rect x="626.5" y="88" width="4.00" height="3.50" fill="#d0dcf0" />
<rect x="632" y="88" width="3.50" height="3.50" fill="#d0dcf0" />
<rect x="619.5" y="93.5" width="16.80" height="11.00" fill="#b08a58" />
<rect x="628" y="95" width="7.00" height="4.00" fill="#d8b878" />
<path d="M541 90Q541 87 544 87H553Q556.5 87 556.5 90V104Q556.5 107 553 107H544Q541 107 541 104Z" fill="#c4a46a" stroke="#6a5030" stroke-width=".7"/>
<rect x="543" y="89" width="12.00" height="3.00" fill="#d8bc80" />
<ellipse cx="588.4" cy="99.6" rx="5" ry="2.5" fill="#3a2410"/>
<ellipse cx="588.4" cy="95.6" rx="5.5" ry="5" fill="#d6be86" stroke="#6a5030" stroke-width=".7"/>
<ellipse cx="588.4" cy="94.6" rx="3.5" ry="2.6" fill="#e6d4a0"/>
<path d="M601.5 90Q601.5 88.2 604 88.2H613Q615.6 88.2 615.6 90L616 97L615.6 103.5Q615.6 105.3 613 105.3H604Q601.5 105.3 601.5 103.5L601 97Z" fill="#a88050" stroke="#4a3018" stroke-width=".7"/>
<rect x="601.3" y="93" width="14.50" height="1.20" fill="#3a2814" />
<rect x="601.3" y="100" width="14.50" height="1.20" fill="#3a2814" />
<ellipse cx="608.5" cy="90" rx="6" ry="1.8" fill="#c09868"/>
<rect x="578" y="107" width="20.00" height="20.00" fill="#3a241a" />
<rect x="585" y="108" width="6.50" height="3.00" fill="#8a5a3a" />
<rect x="585.8" y="110.5" width="5.00" height="4.50" fill="#e6c4a0" />
<rect x="584.5" y="115" width="7.50" height="6.00" fill="#1e1e26" />
<rect x="586.6" y="115" width="3.20" height="4.50" fill="#e8f0f8" />
<rect x="587.6" y="115.5" width="1.20" height="3.00" fill="#3a70b0" />
<rect x="586" y="121" width="1.80" height="5.00" fill="#2a2a30" />
<rect x="588.8" y="121" width="1.80" height="5.00" fill="#2a2a30" />
<rect x="586" y="125" width="4.60" height="1.50" fill="#2a6a50" />
<rect x="599.2" y="131.2" width="18.40" height="11.20" fill="#8a8a84" />
<rect x="599.8" y="131.6" width="8.20" height="10.20" fill="#dcdcd4" />
<rect x="608.8" y="131.6" width="8.20" height="10.20" fill="#dcdcd4" />
<rect x="601" y="134.0" width="5.50" height="0.70" fill="#a09890" />
<rect x="610.5" y="134.0" width="5.00" height="0.70" fill="#a09890" />
<rect x="601" y="136.6" width="5.50" height="0.70" fill="#a09890" />
<rect x="610.5" y="136.6" width="5.00" height="0.70" fill="#a09890" />
<rect x="601" y="139.2" width="5.50" height="0.70" fill="#a09890" />
<rect x="610.5" y="139.2" width="5.00" height="0.70" fill="#a09890" />
<path d="M625.5 139.5Q628 133 633.5 129.5Q632 135 627.5 140.5Z" fill="#30b0c0"/>
<rect x="624" y="139.5" width="5.50" height="4.50" fill="#1e50b0" />
<rect x="626" y="141.5" width="1.50" height="1.50" fill="#e0c030" />
<rect x="479" y="166" width="19.50" height="19.50" fill="#ffffff" />
<rect x="480.3" y="167.3" width="16.90" height="16.90" fill="#3a2a1e" />
<rect x="485" y="168" width="7.50" height="4.00" fill="#e4c468" />
<rect x="486" y="171" width="5.50" height="4.00" fill="#ecd0a8" />
<rect x="484.8" y="175" width="7.90" height="6.00" fill="#2a3248" />
<rect x="487.3" y="175.5" width="2.70" height="2.50" fill="#d8d8e0" />
<rect x="486.2" y="181" width="2.00" height="3.00" fill="#1e2434" />
<rect x="489.2" y="181" width="2.00" height="3.00" fill="#1e2434" />
<rect x="499" y="247.5" width="19.00" height="18.50" fill="#d2ac6a" />
<rect x="500" y="249" width="17.00" height="16.00" fill="#c09858" />
<rect x="499" y="205" width="19.00" height="1.60" fill="#1a1008" />
<rect x="537.8" y="205" width="21.20" height="1.60" fill="#1a1008" />
</svg>
<svg class="a" style="left:289px;top:17px" width="427" height="366"><line x1="10.50" y1="0" x2="10.50" y2="334.96" stroke="#d0d0d0" stroke-opacity=".13" stroke-width="1.6"/><line x1="30.81" y1="0" x2="30.81" y2="334.96" stroke="#d0d0d0" stroke-opacity=".13" stroke-width="1.6"/><line x1="51.12" y1="0" x2="51.12" y2="334.96" stroke="#d0d0d0" stroke-opacity=".13" stroke-width="1.6"/><line x1="71.43" y1="0" x2="71.43" y2="334.96" stroke="#d0d0d0" stroke-opacity=".13" stroke-width="1.6"/><line x1="91.74" y1="0" x2="91.74" y2="334.96" stroke="#d0d0d0" stroke-opacity=".13" stroke-width="1.6"/><line x1="112.05" y1="0" x2="112.05" y2="334.96" stroke="#d0d0d0" stroke-opacity=".13" stroke-width="1.6"/><line x1="132.36" y1="0" x2="132.36" y2="334.96" stroke="#d0d0d0" stroke-opacity=".13" stroke-width="1.6"/><line x1="152.67" y1="0" x2="152.67" y2="334.96" stroke="#d0d0d0" stroke-opacity=".13" stroke-width="1.6"/><line x1="172.98" y1="0" x2="172.98" y2="334.96" stroke="#d0d0d0" stroke-opacity=".13" stroke-width="1.6"/><line x1="193.29" y1="0" x2="193.29" y2="334.96" stroke="#d0d0d0" stroke-opacity=".13" stroke-width="1.6"/><line x1="213.60" y1="0" x2="213.60" y2="334.96" stroke="#d0d0d0" stroke-opacity=".13" stroke-width="1.6"/><line x1="233.91" y1="0" x2="233.91" y2="334.96" stroke="#d0d0d0" stroke-opacity=".13" stroke-width="1.6"/><line x1="254.22" y1="0" x2="254.22" y2="334.96" stroke="#d0d0d0" stroke-opacity=".13" stroke-width="1.6"/><line x1="274.53" y1="0" x2="274.53" y2="334.96" stroke="#d0d0d0" stroke-opacity=".13" stroke-width="1.6"/><line x1="294.84" y1="0" x2="294.84" y2="334.96" stroke="#d0d0d0" stroke-opacity=".13" stroke-width="1.6"/><line x1="315.15" y1="0" x2="315.15" y2="334.96" stroke="#d0d0d0" stroke-opacity=".13" stroke-width="1.6"/><line x1="335.46" y1="0" x2="335.46" y2="334.96" stroke="#d0d0d0" stroke-opacity=".13" stroke-width="1.6"/><line x1="355.77" y1="0" x2="355.77" y2="334.96" stroke="#d0d0d0" stroke-opacity=".13" stroke-width="1.6"/><line x1="376.08" y1="0" x2="376.08" y2="334.96" stroke="#d0d0d0" stroke-opacity=".13" stroke-width="1.6"/><line x1="396.39" y1="0" x2="396.39" y2="334.96" stroke="#d0d0d0" stroke-opacity=".13" stroke-width="1.6"/><line x1="416.70" y1="0" x2="416.70" y2="334.96" stroke="#d0d0d0" stroke-opacity=".13" stroke-width="1.6"/><line x1="10.50" y1="10.00" x2="416.70" y2="10.00" stroke="#d0d0d0" stroke-opacity=".13" stroke-width="1.6"/><line x1="10.50" y1="30.31" x2="416.70" y2="30.31" stroke="#d0d0d0" stroke-opacity=".13" stroke-width="1.6"/><line x1="10.50" y1="50.62" x2="416.70" y2="50.62" stroke="#d0d0d0" stroke-opacity=".13" stroke-width="1.6"/><line x1="10.50" y1="70.93" x2="416.70" y2="70.93" stroke="#d0d0d0" stroke-opacity=".13" stroke-width="1.6"/><line x1="10.50" y1="91.24" x2="416.70" y2="91.24" stroke="#d0d0d0" stroke-opacity=".13" stroke-width="1.6"/><line x1="10.50" y1="111.55" x2="416.70" y2="111.55" stroke="#d0d0d0" stroke-opacity=".13" stroke-width="1.6"/><line x1="10.50" y1="131.86" x2="416.70" y2="131.86" stroke="#d0d0d0" stroke-opacity=".13" stroke-width="1.6"/><line x1="10.50" y1="152.17" x2="416.70" y2="152.17" stroke="#d0d0d0" stroke-opacity=".13" stroke-width="1.6"/><line x1="10.50" y1="172.48" x2="416.70" y2="172.48" stroke="#d0d0d0" stroke-opacity=".13" stroke-width="1.6"/><line x1="10.50" y1="192.79" x2="416.70" y2="192.79" stroke="#d0d0d0" stroke-opacity=".13" stroke-width="1.6"/><line x1="10.50" y1="213.10" x2="416.70" y2="213.10" stroke="#d0d0d0" stroke-opacity=".13" stroke-width="1.6"/><line x1="10.50" y1="233.41" x2="416.70" y2="233.41" stroke="#d0d0d0" stroke-opacity=".13" stroke-width="1.6"/><line x1="10.50" y1="253.72" x2="416.70" y2="253.72" stroke="#d0d0d0" stroke-opacity=".13" stroke-width="1.6"/><line x1="10.50" y1="274.03" x2="416.70" y2="274.03" stroke="#d0d0d0" stroke-opacity=".13" stroke-width="1.6"/><line x1="10.50" y1="294.34" x2="416.70" y2="294.34" stroke="#d0d0d0" stroke-opacity=".13" stroke-width="1.6"/><line x1="10.50" y1="314.65" x2="416.70" y2="314.65" stroke="#d0d0d0" stroke-opacity=".13" stroke-width="1.6"/><line x1="10.50" y1="334.96" x2="416.70" y2="334.96" stroke="#d0d0d0" stroke-opacity=".13" stroke-width="1.6"/></svg>
<div class="lbl" style="left:296px;top:0.5px;font-size:12px;color:#c8c8c8;"><span class="k">プ</span><span class="k">レ</span><span class="k">ビ</span><span class="k">ュ</span><span class="k">ー</span><span style="font-size:13px"> </span><span class="k">シ</span><span class="k">ー</span><span class="k">ン</span></div>
<div class="lbl" style="left:395px;top:0.5px;font-size:12px;color:#c8c8c8;"><span class="k">ア</span><span class="k">ウ</span><span class="k">ト</span><span class="k">ラ</span><span class="k">イ</span><span class="k">ン</span><span style="font-size:13px"> </span><span class="k">シ</span><span class="k">ー</span><span class="k">ン</span></div>
<div class="lbl" style="left:502px;top:0.5px;font-size:12px;color:#c8c8c8;"><span class="k">ア</span><span class="k">ニ</span><span class="k">メ</span><span class="k">ー</span><span class="k">シ</span><span class="k">ョ</span><span class="k">ン</span><span style="font-size:13px"> </span><span class="k">シ</span><span class="k">ー</span><span class="k">ン</span></div>
<div class="lbl" style="left:635px;top:0.5px;font-size:12px;color:#c8c8c8;"><span class="k">ゲ</span><span class="k">ー</span><span class="k">ム</span></div>
<svg class="a" style="left:617px;top:4px" width="15" height="10" viewBox="0 0 15 10"><path d="M3.5 1H11.5C13.5 1 14.5 2.5 14.5 5S13.5 9 12 9C10.8 9 10.3 7.5 9.5 7H5.5C4.7 7.5 4.2 9 3 9C1.5 9 0.5 7.5 0.5 5S1.5 1 3.5 1Z" fill="#c8c8c8"/><path d="M3 4H6M4.5 2.5V5.5" stroke="#262626" stroke-width="1.2"/><circle cx="10" cy="3.5" r=".9" fill="#262626"/><circle cx="11.5" cy="5.2" r=".9" fill="#262626"/></svg>
<div class="a" style="left:678px;top:0px;width:16px;height:17px;background:#2f2f2f;"></div>
<div class="a" style="left:684px;top:4px;width:0;height:0;border-top:4.5px solid transparent;border-bottom:4.5px solid transparent;border-left:5.5px solid #d0d0d0"></div>
<div class="a" style="left:716px;top:0px;width:2px;height:599px;background:#1e1e1e;"></div>
<div class="a" style="left:718px;top:17px;width:269px;height:390px;background:#383838;"></div>
<div class="a" style="left:718px;top:0px;width:84px;height:17px;background:#3b3b3b;"></div>
<div class="a" style="left:802px;top:0px;width:185px;height:17px;background:#262626;"></div>
<div class="a" style="left:718px;top:17px;width:260px;height:21px;background:#3e3e3e;"></div>
<div class="a" style="left:718px;top:38px;width:260px;height:1px;background:#2e2e2e;"></div>
<div class="a" style="left:736px;top:23.3px;width:0;height:0;border-left:4.5px solid transparent;border-right:4.5px solid transparent;border-top:7.5px solid #7a7a7a"></div>
<div class="lbl" style="left:758.5px;top:20.5px;font-size:12px;color:#c4c4c4;">基本設定</div>
<div class="lbl" style="left:758.5px;top:43px;font-size:12px;color:#d0d0d0;"><span style="font-size:13px">I</span><span style="font-size:13px">D</span></div>
<div class="lbl" style="left:843.3px;top:42px;font-size:12px;color:#d0d0d0;"><span style="font-size:13px">2</span><span style="font-size:13px">2</span><span style="font-size:13px">0</span><span style="font-size:13px">6</span></div>
<div class="lbl" style="left:758.5px;top:66px;font-size:12px;color:#d0d0d0;">名前</div>
<div class="lbl" style="left:758.5px;top:87.5px;font-size:12px;color:#d0d0d0;"><span class="k">メ</span><span class="k">モ</span></div>
<div class="a" style="left:845px;top:62px;width:122px;height:17.6px;background:#2a2a2a;border-radius:3px;border-top:1px solid #1e1e1e"></div>
<div class="a" style="left:845px;top:84px;width:122px;height:17.3px;background:#2a2a2a;border-radius:3px;border-top:1px solid #1e1e1e"></div>
<div class="a" style="left:718px;top:104px;width:260px;height:20.5px;background:#3e3e3e;"></div>
<div class="a" style="left:718px;top:124.5px;width:260px;height:1px;background:#2e2e2e;"></div>
<div class="a" style="left:736.5px;top:110.5px;width:0;height:0;border-left:4.5px solid transparent;border-right:4.5px solid transparent;border-top:7.5px solid #7a7a7a"></div>
<div class="lbl" style="left:758.2px;top:107.5px;font-size:12px;color:#c4c4c4;"><span class="k">ペ</span><span class="k">ー</span><span class="k">ジ</span>設定</div>
<div class="lbl" style="left:758.2px;top:131.5px;font-size:12px;color:#d0d0d0;"><span class="k">チ</span><span class="k">ャ</span><span class="k">プ</span><span class="k">タ</span><span class="k">ー</span></div>
<div class="lbl" style="left:758.2px;top:155px;font-size:12px;color:#d0d0d0;"><span class="k">セ</span><span class="k">ク</span><span class="k">シ</span><span class="k">ョ</span><span class="k">ン</span></div>
<div class="a" style="left:846px;top:129.2px;width:120.0px;height:17.5px;background:#585858;border-radius:3px;box-shadow:0 1px 0 #242424"></div>
<div class="lbl" style="left:846px;width:120.0px;text-align:center;top:129.9px;font-size:12px;color:#d8d8d8"><span style="font-size:13px">0</span><span style="font-size:13px">0</span><span style="font-size:13px">0</span><span style="font-size:13px">1</span><span style="font-size:13px"> </span><span style="font-size:13px">:</span><span style="font-size:13px"> </span>名称未設定</div>
<div class="a" style="left:846px;top:153px;width:120.0px;height:17.8px;background:#585858;border-radius:3px;box-shadow:0 1px 0 #242424"></div>
<div class="lbl" style="left:846px;width:120.0px;text-align:center;top:153.9px;font-size:12px;color:#d8d8d8"><span style="font-size:13px">0</span><span style="font-size:13px">0</span><span style="font-size:13px">0</span><span style="font-size:13px">1</span><span style="font-size:13px"> </span><span style="font-size:13px">:</span><span style="font-size:13px"> </span>名称未設定</div>
<div class="a" style="left:751px;top:180.5px;width:0;height:0;border-left:4.5px solid transparent;border-right:4.5px solid transparent;border-top:7.5px solid #7a7a7a"></div>
<div class="lbl" style="left:773.4px;top:177.5px;font-size:12px;color:#d0d0d0;">近<span class="h">づ</span><span class="h">く</span></div>
<div class="lbl" style="left:773.4px;top:196.5px;font-size:12px;color:#d0d0d0;"><span class="k">テ</span><span class="k">ン</span><span class="k">プ</span><span class="k">レ</span><span class="k">ー</span><span class="k">ト</span><span class="h">の</span>読込<span class="h">み</span></div>
<div class="a" style="left:777px;top:216px;width:198.0px;height:18.0px;background:#585858;border-radius:3px;box-shadow:0 1px 0 #242424"></div>
<div class="lbl" style="left:777px;width:198.0px;text-align:center;top:217.0px;font-size:12px;color:#d8d8d8"><span class="k">イ</span><span class="k">ン</span><span class="k">ポ</span><span class="k">ー</span><span class="k">ト</span></div>
<div class="a" style="left:751.7px;top:243.3px;width:0;height:0;border-left:4.5px solid transparent;border-right:4.5px solid transparent;border-top:7.5px solid #7a7a7a"></div>
<div class="lbl" style="left:773.8px;top:241.5px;font-size:12px;color:#d0d0d0;">出現条件</div>
<div class="a" style="left:776px;top:262.2px;width:14px;height:14px;background:#2c2c2c;border:1px solid #252525;border-radius:2px"></div>
<div class="lbl" style="left:794px;top:262.2px;font-size:12px;color:#d0d0d0;"><span class="k">ス</span><span class="k">イ</span><span class="k">ッ</span><span class="k">チ</span><span style="font-size:13px"> </span><span style="font-size:13px">1</span></div>
<div class="a" style="left:776px;top:285px;width:14px;height:14px;background:#2c2c2c;border:1px solid #252525;border-radius:2px"></div>
<div class="lbl" style="left:794px;top:285px;font-size:12px;color:#d0d0d0;"><span class="k">ス</span><span class="k">イ</span><span class="k">ッ</span><span class="k">チ</span><span style="font-size:13px"> </span><span style="font-size:13px">2</span></div>
<div class="a" style="left:776px;top:308.1px;width:14px;height:14px;background:#2c2c2c;border:1px solid #252525;border-radius:2px"></div>
<div class="lbl" style="left:794px;top:308.1px;font-size:12px;color:#d0d0d0;">変数</div>
<div class="a" style="left:776px;top:331px;width:14px;height:14px;background:#2c2c2c;border:1px solid #252525;border-radius:2px"></div>
<div class="lbl" style="left:794px;top:331px;font-size:12px;color:#d0d0d0;"><span class="k">セ</span><span class="k">ル</span><span class="k">フ</span><span class="k">ス</span><span class="k">イ</span><span class="k">ッ</span><span class="k">チ</span></div>
<div class="a" style="left:776px;top:354px;width:14px;height:14px;background:#2c2c2c;border:1px solid #252525;border-radius:2px"></div>
<div class="lbl" style="left:794px;top:354px;font-size:12px;color:#d0d0d0;"><span class="k">ア</span><span class="k">イ</span><span class="k">テ</span><span class="k">ム</span></div>
<div class="a" style="left:776px;top:378px;width:14px;height:14px;background:#2c2c2c;border:1px solid #252525;border-radius:2px"></div>
<div class="lbl" style="left:794px;top:378px;font-size:12px;color:#d0d0d0;"><span class="k">ア</span><span class="k">ク</span><span class="k">タ</span><span class="k">ー</span></div>
<div class="a" style="left:856px;top:261px;width:110.0px;height:17.2px;background:#464646;border-radius:3px;"></div>
<div class="lbl" style="left:856px;width:110.0px;text-align:center;top:261.6px;font-size:12px;color:#9c9c9c"><span style="font-size:13px">0</span><span style="font-size:13px">0</span><span style="font-size:13px">0</span><span style="font-size:13px">1</span><span style="font-size:13px"> </span><span style="font-size:13px">:</span></div>
<div class="a" style="left:856px;top:284px;width:110.0px;height:17.0px;background:#464646;border-radius:3px;"></div>
<div class="lbl" style="left:856px;width:110.0px;text-align:center;top:284.5px;font-size:12px;color:#9c9c9c"><span style="font-size:13px">0</span><span style="font-size:13px">0</span><span style="font-size:13px">0</span><span style="font-size:13px">1</span><span style="font-size:13px"> </span><span style="font-size:13px">:</span></div>
<div class="a" style="left:856px;top:307px;width:47.0px;height:16.7px;background:#464646;border-radius:3px;"></div>
<div class="lbl" style="left:856px;width:47.0px;text-align:center;top:307.4px;font-size:12px;color:#9c9c9c"><span style="font-size:13px">0</span><span style="font-size:13px">0</span><span style="font-size:13px">0</span><span style="font-size:13px">1</span><span style="font-size:13px"> </span><span style="font-size:13px">:</span></div>
<div class="lbl" style="left:909.5px;top:307.5px;font-size:12px;color:#c8c8c8;">≧</div>
<div class="a" style="left:925.6px;top:306.3px;width:41px;height:18px;background:#2e2e2e;border-radius:3px;border:1px solid #262626"></div>
<div class="lbl" style="left:929px;top:307.5px;font-size:12px;color:#8a8a8a;"><span style="font-size:13px">0</span></div>
<div class="a" style="left:863px;top:330px;width:109.7px;height:17.0px;background:#464646;border-radius:3px;"></div>
<div class="lbl" style="left:863px;width:109.7px;text-align:center;top:330.5px;font-size:12px;color:#9c9c9c"><span style="font-size:13px">0</span><span style="font-size:13px">0</span><span style="font-size:13px">0</span><span style="font-size:13px">1</span><span style="font-size:13px"> </span><span style="font-size:13px">:</span><span style="font-size:13px"> </span><span style="font-size:13px">A</span></div>
<div class="a" style="left:856px;top:353px;width:110.0px;height:17.8px;background:#464646;border-radius:3px;"></div>
<div class="lbl" style="left:856px;width:110.0px;text-align:center;top:353.9px;font-size:12px;color:#9c9c9c"><span style="font-size:13px">0</span><span style="font-size:13px">0</span><span style="font-size:13px">0</span><span style="font-size:13px">1</span><span style="font-size:13px"> </span><span style="font-size:13px">:</span><span style="font-size:13px"> </span><span style="font-size:13px">-</span><span style="font-size:13px">-</span><span style="font-size:13px">-</span><span style="font-size:13px">-</span><span style="font-size:13px">-</span>予備</div>
<div class="a" style="left:856px;top:377px;width:110.0px;height:17.7px;background:#464646;border-radius:3px;"></div>
<div class="lbl" style="left:856px;width:110.0px;text-align:center;top:377.9px;font-size:12px;color:#9c9c9c"><span style="font-size:13px">0</span><span style="font-size:13px">0</span><span style="font-size:13px">0</span><span style="font-size:13px">1</span><span style="font-size:13px"> </span><span style="font-size:13px">:</span><span style="font-size:13px"> </span><span class="k">ク</span><span class="k">ラ</span><span class="k">フ</span><span class="k">ト</span></div>
<div class="a" style="left:978px;top:17px;width:9px;height:380px;background:#333333;"></div>
<div class="a" style="left:980.6px;top:33.8px;width:8px;height:113px;background:#5c5c5c;border-radius:4px"></div>
<div class="a" style="left:981px;top:22.5px;width:0;height:0;border-left:3.5px solid transparent;border-right:3.5px solid transparent;border-bottom:4px solid #d0d0d0"></div>
<div class="a" style="left:982.6px;top:216px;width:17.4px;height:18.0px;background:#585858;border-radius:3px;box-shadow:0 1px 0 #242424"></div>
<div class="a" style="left:981px;top:385px;width:0;height:0;border-left:3.5px solid transparent;border-right:3.5px solid transparent;border-top:4px solid #d0d0d0"></div>
<div class="a" style="left:718px;top:397px;width:260px;height:10.5px;background:#383838;"></div>
<div class="a" style="left:870.6px;top:400.7px;width:110.2px;height:7.3px;overflow:hidden;background:#4c4c4c;border-radius:3px 3px 0 0"><div class="lbl" style="left:11px;top:2.5px;color:#a8a8a8"><span style="font-size:13px">0</span><span style="font-size:13px">0</span><span style="font-size:13px">0</span><span style="font-size:13px">1</span></div><div class="lbl" style="left:78px;top:2.5px;color:#a8a8a8">予備</div></div>
<div class="a" style="left:734.8px;top:397.5px;width:126px;height:10px;background:#5a5a5a;border-radius:5px"></div>
<div class="a" style="left:723px;top:399px;width:0;height:0;border-top:4px solid transparent;border-bottom:4px solid transparent;border-right:5px solid #d0d0d0"></div>
<div class="a" style="left:968px;top:398.5px;width:0;height:0;border-top:4px solid transparent;border-bottom:4px solid transparent;border-left:5px solid #d0d0d0"></div>
<div class="a" style="left:289px;top:383px;width:427px;height:92px;background:#383838;"></div>
<div class="a" style="left:289px;top:475px;width:427px;height:2px;background:#232323;"></div>
<div class="a" style="left:289px;top:477px;width:427px;height:18px;background:#282828;"></div>
<div class="a" style="left:289px;top:477px;width:104px;height:18px;background:#3c3c3c;border-radius:3px 3px 0 0"></div>
<div class="a" style="left:289px;top:495px;width:427px;height:104px;background:#3a3a3a;"></div>
<div class="a" style="left:289px;top:512px;width:427px;height:19px;background:#2c5d8a;"></div>
<div class="a" style="left:718px;top:408px;width:269px;height:2px;background:#1e1e1e;"></div>
<div class="a" style="left:718px;top:410px;width:269px;height:19px;background:#262626;"></div>
<div class="a" style="left:718px;top:410px;width:91px;height:19px;background:#3c3c3c;border-radius:3px 3px 0 0"></div>
<div class="a" style="left:718px;top:429px;width:269px;height:170px;background:#383838;"></div>
<div class="lbl" style="left:725px;top:412px;font-size:12px;color:#c4c4c4;"><span class="k">イ</span><span class="k">ベ</span><span class="k">ン</span><span class="k">ト</span><span class="k">コ</span><span class="k">マ</span><span class="k">ン</span><span class="k">ド</span></div>
<div class="lbl" style="left:295.6px;top:479.5px;font-size:12px;color:#c8c8c8;"><span class="k">イ</span><span class="k">ベ</span><span class="k">ン</span><span class="k">ト</span>実行内容</div>
<div class="lbl" style="left:290.8px;top:497px;font-size:12px;color:#a8a8a8;">実行内容</div>
<div class="a" style="left:298px;top:517.5px;width:8px;height:8px;background:#f0f0f0;transform:rotate(45deg)"></div>
<div class="a" style="left:624px;top:500px;width:363px;height:45px;background:#ffffff;"></div>
<div class="a" style="left:429px;top:545px;width:558px;height:54px;background:#ffffff;"></div>
<svg class="a" style="left:620px;top:496px" width="56" height="54" viewBox="620 496 56 54"><path d="M624.1 501L632.6 506.8V540.2L624.1 546.5Z" fill="#000"/><path d="M671 501L662.8 506.8V540.2L671 546.5Z" fill="#000"/><path d="M634.9 507.7H638V534L634.9 536.6Z" fill="#000"/><path d="M660.1 507.7H657V534L660.1 536.6Z" fill="#000"/><path d="M641.2 507.7H653.8V530.7L650 529.5V523.5A2.2 2.2 0 0 0 645.6 523.5V529.5L641.2 530.7Z" fill="#000"/></svg>
<div class="lbl" style="left:684.5px;top:504.5px;font-size:35.5px;line-height:38px;font-weight:bold;color:#000;-webkit-text-stroke:1px #000;transform:scaleX(.925);transform-origin:0 0">RPG MAKER</div>
<svg class="a" style="left:876px;top:500px" width="111" height="45" viewBox="876 500 111 45"><g fill="none" stroke="#3a3a3a" stroke-width="1.3"><path d="M898 510.8V527A9.2 9.2 0 0 0 916.4 527V510.8"/><path d="M920.6 536.2V511L939.9 536V510.8"/><path d="M944.4 510.8V536.2"/><path d="M947.8 511.4H967.3M957.5 511.4V536.2"/><path d="M990 511.4H970.6V535.6H990M970.6 523H988"/></g><circle cx="887.4" cy="510.3" r="3" fill="none" stroke="#555" stroke-width="0.9"/><text x="887.4" y="512.2" font-size="4.5" text-anchor="middle" fill="#555" font-family="Liberation Sans">R</text></svg>
<div class="lbl" style="left:431px;top:547px;font-size:18.5px;line-height:24px;color:#000;-webkit-text-stroke:.35px #000">画像は開発中のものにつき、実際の仕様と異なる場合があります。</div>
<div class="lbl" style="left:432px;top:575px;font-family:'Liberation Mono',monospace;font-size:15.6px;line-height:20px;color:#000;transform:scaleY(1.16);transform-origin:0 0">Under Development. May differ from the final product.</div>
</body></html>
